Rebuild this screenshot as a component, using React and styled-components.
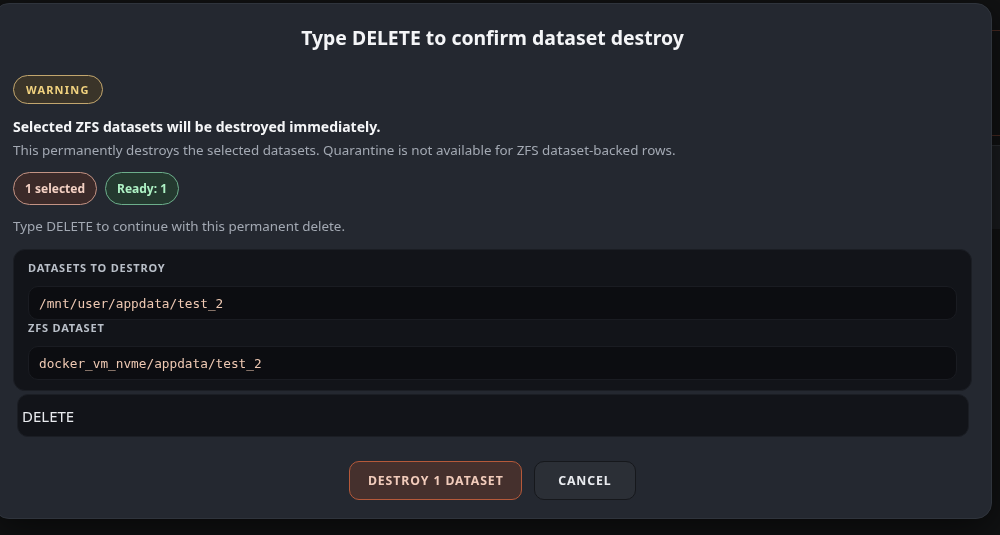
import React from "react";
import styled, { createGlobalStyle } from "styled-components";

const Global = createGlobalStyle`
  html, body { margin: 0; padding: 0; background: #111213; }
  body { font-family: "Noto Sans", "DejaVu Sans", sans-serif; overflow: hidden; }
  * { box-sizing: border-box; }
`;

const Page = styled.div`
  width: 1000px;
  height: 535px;
  background: #111213;
  display: flex;
  flex-direction: column;
`;

const BgHeader = styled.div`
  height: 31px;
  border-bottom: 1px solid #4a2a22;
`;

const BgToolbar = styled.div`
  height: 105px;
  border-bottom: 1px solid #4a2a22;
`;

const BgPanel = styled.div`
  margin-top: 9px;
  height: 84px;
  background: #1a1c1f;
  border-top: 1px solid #2a2d31;
`;

const Modal = styled.div`
  position: fixed;
  left: -7px;
  top: 3px;
  width: 999px;
  height: 516px;
  background: #242830;
  border: 1px solid #2f343c;
  border-radius: 16px;
  box-shadow: 0 10px 40px rgba(0, 0, 0, 0.6);
  padding: 18px 19px 0 19px;
  display: flex;
  flex-direction: column;
  align-items: stretch;
`;

const Title = styled.h2`
  margin: 0;
  text-align: center;
  font-size: 19.4px;
  line-height: 32px;
  font-weight: 700;
  color: #f4f5f7;
`;

const Pill = styled.span`
  display: inline-flex;
  align-items: center;
  justify-content: center;
  height: ${(p) => p.$h || 33}px;
  padding: 0 ${(p) => p.$px || 11}px;
  border-radius: 999px;
  border: 1.5px solid ${(p) => p.$border};
  background: ${(p) => p.$bg};
  color: ${(p) => p.$color};
  font-weight: 700;
  font-size: ${(p) => p.$fs || 12}px;
  letter-spacing: ${(p) => p.$ls || 0}px;
  white-space: nowrap;
`;

const WarnRow = styled.div`
  margin-top: 21px;
  display: flex;
`;

const Headline = styled.div`
  margin-top: 13px;
  font-size: 14px;
  line-height: 20px;
  font-weight: 700;
  color: #f4f5f7;
`;

const Muted = styled.div`
  margin-top: ${(p) => p.$mt || 0}px;
  font-size: 13.4px;
  line-height: 20px;
  color: #a3a9b3;
`;

const PillRow = styled.div`
  margin-top: 12px;
  display: flex;
  gap: 8px;
`;

const DataBox = styled.div`
  margin-top: 13px;
  background: #121419;
  border: 1px solid #1b1e24;
  border-radius: 12px;
  padding: 10px 14px 10px 14px;
  display: flex;
  flex-direction: column;
`;

const Label = styled.div`
  font-size: 11px;
  line-height: 16px;
  font-weight: 700;
  letter-spacing: 0.8px;
  color: #b9bfc8;
  text-transform: uppercase;
`;

const Code = styled.div`
  margin-top: 10px;
  height: 34px;
  display: flex;
  align-items: center;
  padding: 0 10px;
  background: #0c0d11;
  border: 1px solid #1a1c22;
  border-radius: 10px;
  font-family: "DejaVu Sans Mono", "Liberation Mono", monospace;
  font-size: 12.75px;
  color: #efc9b3;
`;

const Input = styled.input`
  margin: 3px 3px 0 4px;
  height: 43px;
  background: #121419;
  border: 1px solid #1b1e24;
  border-radius: 11px;
  padding: 0 4px;
  color: #e9ebef;
  font-family: "Noto Sans", sans-serif;
  font-size: 15px;
  outline: none;
`;

const Actions = styled.div`
  margin-top: 24px;
  display: flex;
  justify-content: center;
  gap: 12px;
`;

const Button = styled.button`
  height: 39px;
  padding: 0 ${(p) => p.$px}px;
  border-radius: 10px;
  border: 1.5px solid ${(p) => p.$border};
  background: ${(p) => p.$bg};
  color: ${(p) => p.$color};
  font-family: "Noto Sans", sans-serif;
  font-weight: 700;
  font-size: 12.3px;
  letter-spacing: 0.9px;
  text-transform: uppercase;
  cursor: pointer;
`;

export default function App() {
  return (
    <>
      <Global />
      <Page>
        <BgHeader />
        <BgToolbar />
        <BgPanel />
      </Page>
      <Modal>
        <Title>Type DELETE to confirm dataset destroy</Title>
        <WarnRow>
          <Pill $h={29} $px={12} $fs={11} $ls={1.2} $border="#c2a66e" $bg="#3a3429" $color="#f1d27f">
            WARNING
          </Pill>
        </WarnRow>
        <Headline>Selected ZFS datasets will be destroyed immediately.</Headline>
        <Muted $mt={3}>
          This permanently destroys the selected datasets. Quarantine is not available for ZFS dataset-backed rows.
        </Muted>
        <PillRow>
          <Pill $border="#c39384" $bg="#3b2a29" $color="#f3d0c3">1 selected</Pill>
          <Pill $border="#6cae8b" $bg="#24392f" $color="#aef2c5">Ready: 1</Pill>
        </PillRow>
        <Muted $mt={11}>Type DELETE to continue with this permanent delete.</Muted>
        <DataBox>
          <Label>Datasets to destroy</Label>
          <Code>/mnt/user/appdata/test_2</Code>
          <Label>ZFS dataset</Label>
          <Code>docker_vm_nvme/appdata/test_2</Code>
        </DataBox>
        <Input defaultValue="DELETE" />
        <Actions>
          <Button $px={17.5} $border="#b5593a" $bg="#45302d" $color="#f1cbbb">
            Destroy 1 dataset
          </Button>
          <Button $px={23} $border="#16181c" $bg="#2b2f36" $color="#e9ebef">
            Cancel
          </Button>
        </Actions>
      </Modal>
    </>
  );
}
